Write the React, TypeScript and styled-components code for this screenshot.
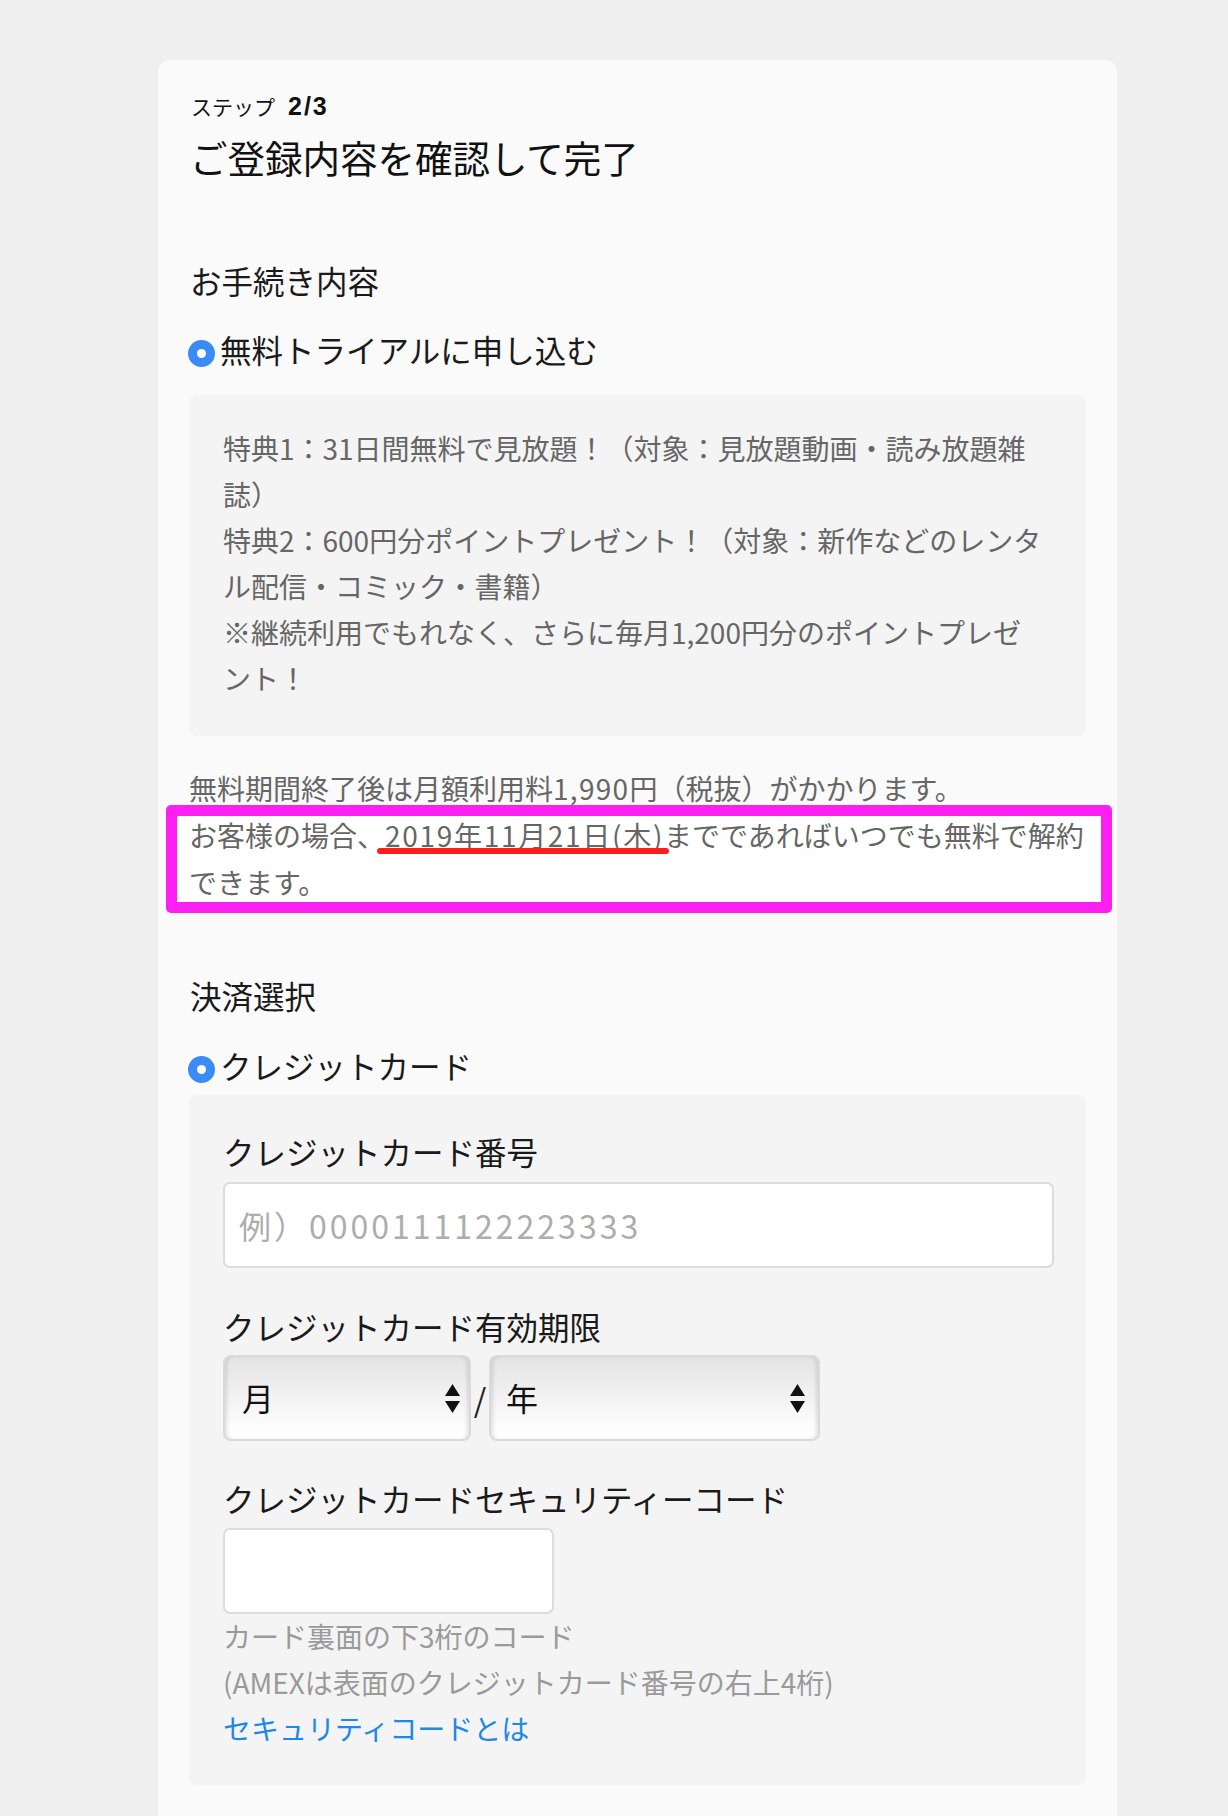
import React from "react";
import styled, { createGlobalStyle } from "styled-components";

const GlobalStyle = createGlobalStyle`
  html, body {
    margin: 0;
    padding: 0;
    background: #efefef;
  }
  body {
    font-family: "Noto Sans CJK JP", "Noto Sans", sans-serif;
    color: #111;
    text-spacing-trim: space-all;
  }
  * { box-sizing: border-box; }
`;

const Page = styled.div`
  padding-top: 60px;
`;

const Card = styled.main`
  margin-left: 158px;
  width: 959px;
  background: #fafafa;
  border-radius: 12px;
  padding: 31px 31px 60px 31px;
`;

const StepLabel = styled.div`
  height: 30px;
  font-size: 21px;
  line-height: 30px;
  color: #111;
  padding-left: 2px;
  white-space: nowrap;
`;

const StepCount = styled.span`
  margin-left: 13px;
  font-family: "Liberation Sans", Arial, sans-serif;
  font-weight: 700;
  font-size: 25px;
  line-height: 0;
  letter-spacing: 2px;
`;

const Title = styled.h1`
  margin: 11px 0 0;
  font-size: 37.5px;
  line-height: 50px;
  font-weight: 400;
  color: #111;
  padding-left: 1px;
`;

const SectionHeading = styled.h2<{ $top: number }>`
  margin: ${(p) => p.$top}px 0 0;
  font-size: 31.5px;
  line-height: 44px;
  font-weight: 400;
  color: #1a1a1a;
  padding-left: 1px;
`;

const RadioRow = styled.label<{ $top: number }>`
  display: flex;
  align-items: center;
  margin-top: ${(p) => p.$top}px;
  font-size: 31.5px;
  line-height: 44px;
  color: #1a1a1a;
`;

const RadioDot = styled.span`
  flex: none;
  width: 27px;
  height: 27px;
  border-radius: 50%;
  background: #3b8bf6;
  margin: 8px 5px 0 -1px;
  display: flex;
  align-items: center;
  justify-content: center;
  &::after {
    content: "";
    width: 9px;
    height: 9px;
    border-radius: 50%;
    background: #fff;
  }
`;

const InfoBox = styled.div`
  margin-top: 24px;
  background: #f4f4f4;
  border-radius: 8px;
  padding: 30px 42px 35px 34px;
  font-size: 28px;
  line-height: 46px;
  color: #666;
`;

const Num = styled.span`
  letter-spacing: 1.3px;
`;

const Notice = styled.div`
  position: relative;
  margin-top: 29px;
  font-size: 28px;
  line-height: 47px;
  color: #666;
`;

const Annotation = styled.div`
  position: absolute;
  left: -23px;
  right: -26px;
  top: 40px;
  height: 108px;
  border: 11px solid #fc1ff2;
  border-radius: 5px;
  background: #fff;
`;

const NoticeText = styled.p`
  position: relative;
  margin: 0;
`;

const DateMark = styled.span`
  position: relative;
  letter-spacing: 1.7px;
  &::after {
    content: "";
    position: absolute;
    left: -8px;
    right: -5px;
    bottom: 1px;
    height: 6px;
    border-radius: 3px;
    background: #ff1c1c;
  }
`;

const PaymentBox = styled.div`
  margin-top: 8px;
  background: #f4f4f4;
  border-radius: 8px;
  padding: 34px 32px 34px 34px;
`;

const FieldLabel = styled.div<{ $top: number }>`
  margin-top: ${(p) => p.$top}px;
  font-size: 31.5px;
  line-height: 44px;
  color: #1a1a1a;
`;

const TextInput = styled.input<{ $width?: number; $top: number }>`
  display: block;
  margin-top: ${(p) => p.$top}px;
  width: ${(p) => (p.$width ? `${p.$width}px` : "100%")};
  height: 86px;
  border: 2px solid #dcdcdc;
  border-radius: 7px;
  background: #fff;
  padding: 0 14px;
  font-family: "Noto Sans CJK JP", sans-serif;
  font-size: 32px;
  color: #111;
  outline: none;
  &::placeholder {
    color: #adadad;
    letter-spacing: 3px;
  }
`;

const SelectRow = styled.div`
  display: flex;
  align-items: center;
  margin-top: 7px;
`;

const SelectBox = styled.div<{ $width: number; $padLeft: number; $padRight: number }>`
  width: ${(p) => p.$width}px;
  height: 86px;
  display: flex;
  align-items: center;
  justify-content: space-between;
  padding: 0 ${(p) => p.$padRight}px 0 ${(p) => p.$padLeft}px;
  border: 2px solid #dadada;
  border-radius: 8px;
  background: linear-gradient(#e4e4e4 0%, #f1f1f1 45%, #fdfdfd 85%, #ffffff 100%);
  box-shadow: inset 4px 0 5px -3px rgba(0, 0, 0, 0.16),
    inset -4px 0 5px -3px rgba(0, 0, 0, 0.16);
  font-size: 32px;
  color: #111;
`;

const SelectText = styled.span`
  margin-top: -3px;
`;

const Slash = styled.span`
  width: 18px;
  text-align: center;
  font-size: 32px;
  color: #222;
`;

const HelpText = styled.div`
  margin-top: -1px;
  font-size: 28px;
  line-height: 46px;
  color: #9a9a9a;
`;

const HelpLink = styled.a`
  display: block;
  color: #1d89e4;
  text-decoration: none;
`;

const Arrows = () => (
  <svg width="15" height="29" viewBox="0 0 15 29" aria-hidden="true">
    <polygon points="7.5,0 15,12 0,12" fill="#111" />
    <polygon points="0,17 15,17 7.5,29" fill="#111" />
  </svg>
);

export default function App() {
  return (
    <>
      <GlobalStyle />
      <Page>
        <Card>
          <StepLabel>
            ステップ<StepCount>2/3</StepCount>
          </StepLabel>
          <Title>ご登録内容を確認して完了</Title>

          <SectionHeading $top={76}>お手続き内容</SectionHeading>
          <RadioRow $top={25}>
            <RadioDot />
            無料トライアルに申し込む
          </RadioRow>
          <InfoBox>
            特典1：31日間無料で見放題！（対象：見放題動画・読み放題雑誌）
            <br />
            特典2：600円分ポイントプレゼント！（対象：新作などのレンタル配信・コミック・書籍）
            <br />
            ※継続利用でもれなく、さらに毎月1,200円分のポイントプレゼント！
          </InfoBox>

          <Notice>
            <Annotation />
            <NoticeText>
              無料期間終了後は月額利用料<Num>1,990</Num>円（税抜）がかかります。
              <br />
              お客様の場合、<DateMark>2019年11月21日(木)</DateMark>までであればいつでも無料で解約できます。
            </NoticeText>
          </Notice>

          <SectionHeading $top={67}>決済選択</SectionHeading>
          <RadioRow $top={26}>
            <RadioDot />
            クレジットカード
          </RadioRow>
          <PaymentBox>
            <FieldLabel $top={0}>クレジットカード番号</FieldLabel>
            <TextInput type="text" $top={9} placeholder="例）0000111122223333" />

            <FieldLabel $top={36}>クレジットカード有効期限</FieldLabel>
            <SelectRow>
              <SelectBox $width={248} $padLeft={17} $padRight={9}>
                <SelectText>月</SelectText>
                <Arrows />
              </SelectBox>
              <Slash>/</Slash>
              <SelectBox $width={331} $padLeft={15} $padRight={13}>
                <SelectText>年</SelectText>
                <Arrows />
              </SelectBox>
            </SelectRow>

            <FieldLabel $top={35}>クレジットカードセキュリティーコード</FieldLabel>
            <TextInput type="text" $top={8} $width={331} />
            <HelpText>
              カード裏面の下3桁のコード
              <br />
              (AMEXは表面のクレジットカード番号の右上4桁)
              <HelpLink href="#">セキュリティコードとは</HelpLink>
            </HelpText>
          </PaymentBox>
        </Card>
      </Page>
    </>
  );
}
